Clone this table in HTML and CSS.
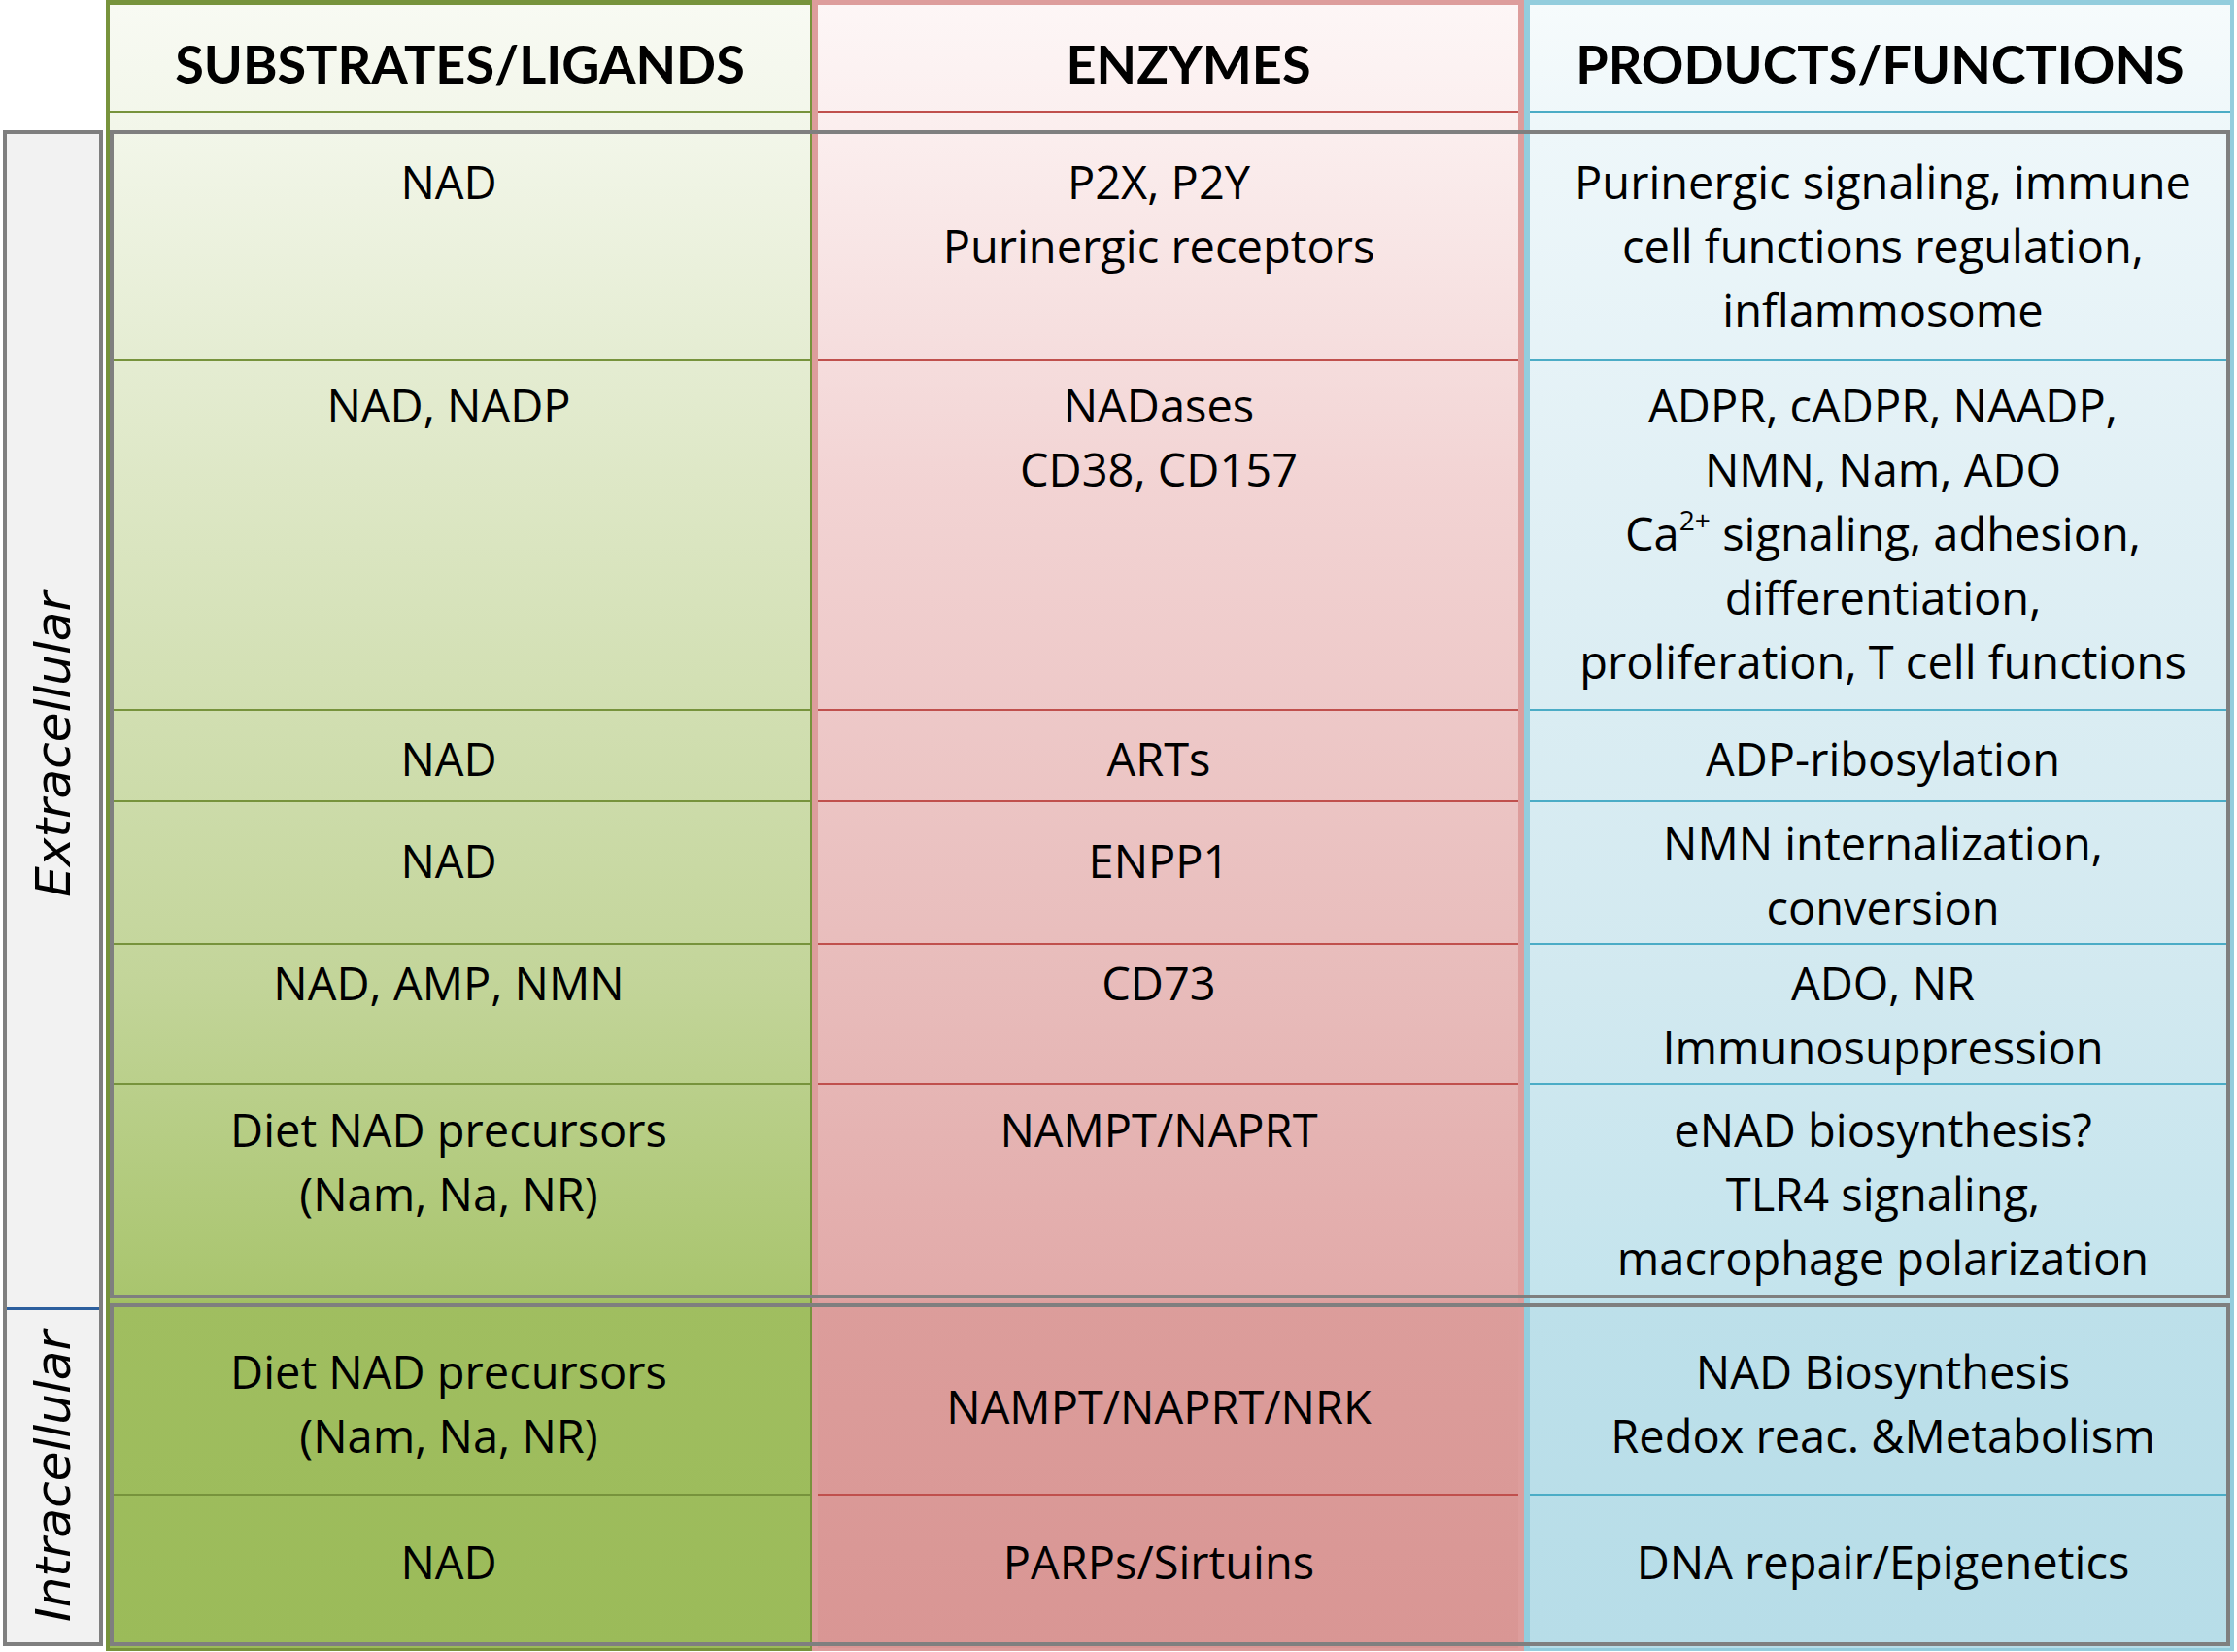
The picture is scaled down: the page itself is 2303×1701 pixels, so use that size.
FILE: index.html
```html
<!DOCTYPE html>
<html lang="en">
<head>
<meta charset="utf-8">
<title>NAD metabolism: substrates, enzymes, products</title>
<link rel="stylesheet" href="styles.css">
</head>
<body>
<main class="sheet">
  <div class="colbg green"></div>
  <div class="colbg red"></div>
  <div class="colbg blue"></div>

  <div class="head g">SUBSTRATES/LIGANDS</div>
  <div class="head r">ENZYMES</div>
  <div class="head b">PRODUCTS/FUNCTIONS</div>

  <div class="cell g row1">NAD</div>
  <div class="cell r row1">P2X, P2Y<br>Purinergic receptors</div>
  <div class="cell b row1">Purinergic signaling, immune<br>cell functions regulation,<br>inflammosome</div>

  <div class="cell g row2">NAD, NADP</div>
  <div class="cell r row2">NADases<br>CD38, CD157</div>
  <div class="cell b row2">ADPR, cADPR, NAADP,<br>NMN, Nam, ADO<br>Ca<sup>2+</sup> signaling, adhesion,<br>differentiation,<br>proliferation, T cell functions</div>

  <div class="cell g row3">NAD</div>
  <div class="cell r row3">ARTs</div>
  <div class="cell b row3">ADP-ribosylation</div>

  <div class="cell g row4 late">NAD</div>
  <div class="cell r row4 late">ENPP1</div>
  <div class="cell b row4">NMN internalization,<br>conversion</div>

  <div class="cell g row5">NAD, AMP, NMN</div>
  <div class="cell r row5">CD73</div>
  <div class="cell b row5">ADO, NR<br>Immunosuppression</div>

  <div class="cell g row6">Diet NAD precursors<br>(Nam, Na, NR)</div>
  <div class="cell r row6">NAMPT/NAPRT</div>
  <div class="cell b row6">eNAD biosynthesis?<br>TLR4 signaling,<br>macrophage polarization</div>

  <div class="cell g row7">Diet NAD precursors<br>(Nam, Na, NR)</div>
  <div class="cell r row7 solo">NAMPT/NAPRT/NRK</div>
  <div class="cell b row7">NAD Biosynthesis<br>Redox reac. &amp;Metabolism</div>

  <div class="cell g row8">NAD</div>
  <div class="cell r row8">PARPs/Sirtuins</div>
  <div class="cell b row8">DNA repair/Epigenetics</div>

  <div class="zone zone-extra"></div>
  <div class="zone zone-intra"></div>

  <aside class="sidebar">
    <div class="side side-extra"><span class="side-label">Extracellular</span></div>
    <div class="side side-intra"><span class="side-label">Intracellular</span></div>
  </aside>
</main>
</body>
</html>
```

FILE: styles.css
```css
html, body {
  margin: 0;
  padding: 0;
  background: #ffffff;
}

.sheet {
  width: 2303px;
  height: 1701px;
  display: grid;
  grid-template-columns: 3px 103px 3px 727px 733px 731px;
  grid-template-rows: 116px 18px 238px 360px 94px 147px 144px 220px 5px 198px 155px 5px;
  font-family: "Open Sans", "Lato", "Liberation Sans", sans-serif;
  color: #000;
}

/* column backgrounds */
.colbg {
  grid-row: 1 / 13;
  border-style: solid;
}
.colbg.green {
  grid-column: 4;
  border-color: #77933c;
  border-width: 5px 2px 3px 4px;
  background: linear-gradient(to bottom, #f8faf3 0px, #f2f6e9 130px, #dde7c5 500px, #c3d59a 1000px, #a9c56e 1328px, #a0be60 1338px, #9bbb59 1692px);
}
.colbg.red {
  grid-column: 5;
  border-color: #dd9d9c;
  border-width: 5px 6px 3px 6px;
  background: linear-gradient(to bottom, #fdf6f6 0px, #fbeeee 130px, #f2d3d3 500px, #e8bcbb 1000px, #e2aaa9 1328px, #dc9d9b 1338px, #d99694 1692px);
}
.colbg.blue {
  grid-column: 6;
  border-color: #93cddd;
  border-width: 5px 4px 3px 6px;
  background: linear-gradient(to bottom, #f6fbfc 0px, #eef7fa 130px, #e1f0f5 500px, #d2e9f0 1000px, #c4e4ed 1328px, #bde0ea 1338px, #b7dde8 1692px);
}

/* header */
.head {
  grid-row: 1;
  border-bottom-style: solid;
  border-bottom-width: 2px;
  padding-top: 33px;
  font-family: "Lato", "Open Sans", sans-serif;
  font-weight: 700;
  font-size: 54px;
  line-height: 66px;
  text-align: center;
  white-space: nowrap;
}

/* body cells */
.cell {
  border-bottom-style: solid;
  border-bottom-width: 2px;
  font-size: 47px;
  line-height: 66px;
  text-align: center;
  white-space: nowrap;
}

/* column placement, inner margins, line colours */
.g { grid-column: 4; margin: 0 2px 0 4px; border-bottom-color: #77933c; }
.r { grid-column: 5; margin: 0 6px; border-bottom-color: #c0504d; }
.b { grid-column: 6; margin: 0 4px 0 6px; border-bottom-color: #4bacc6; }

.head.r { padding-left: 42px; }
.cell.g { padding-right: 23px; }
.cell.r { padding-right: 19px; }
.cell.b { padding-left: 6px; }

.row1 { grid-row: 3; padding-top: 20px; }
.row2 { grid-row: 4; padding-top: 12px; }
.row3 { grid-row: 5; padding-top: 16px; }
.row4 { grid-row: 6; padding-top: 9px; }
.row4.late { padding-top: 27px; }
.row5 { grid-row: 7; padding-top: 6px; }
.row6 { grid-row: 8; padding-top: 13px; border-bottom-width: 0; }
.row7 { grid-row: 10; padding-top: 37px; }
.row7.solo { padding-top: 73px; }
.row8 { grid-row: 11; padding-top: 35px; border-bottom-width: 0; }

sup {
  font-size: 0.6em;
  line-height: 0;
  vertical-align: 0.75em;
}

/* gray zone frames */
.zone {
  grid-column: 4 / 7;
  margin: 0 4px;
  border: 4px solid #7f7f7f;
}
.zone-extra { grid-row: 3 / 9; }
.zone-intra { grid-row: 10 / 12; }

/* left labels */
.sidebar {
  grid-column: 2;
  grid-row: 3 / 12;
  display: flex;
  flex-direction: column;
  border: 4px solid #7f7f7f;
  background: #f2f2f2;
}
.side {
  display: flex;
  align-items: center;
  justify-content: center;
}
.side-extra {
  flex: 0 0 1208px;
  padding-top: 48px;
  box-sizing: border-box;
}
.side-intra {
  flex: 1;
  border-top: 3px solid #2c5f9e;
}
.side-label {
  writing-mode: vertical-rl;
  transform: rotate(180deg);
  font-family: "DejaVu Sans", "Verdana", sans-serif;
  font-style: italic;
  font-size: 50px;
  line-height: 60px;
  white-space: nowrap;
}
```
